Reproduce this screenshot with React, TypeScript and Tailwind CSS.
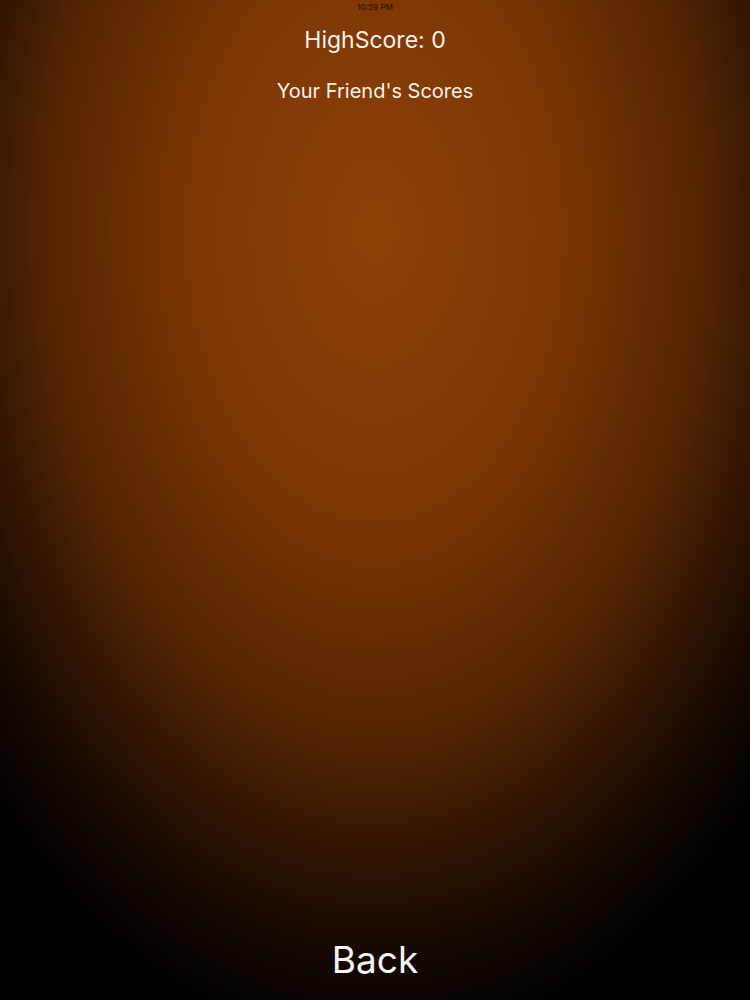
export default function App() {
  return (
    <div
      className="flex h-[1000px] w-[750px] flex-col items-center overflow-hidden bg-[radial-gradient(ellipse_530px_820px_at_50%_23%,#8e4006_0%,#7c3604_35%,#542402_62%,#1c0b01_85%,#000_100%)] text-[#fbf3ea]"
      style={{ fontFamily: 'Inter, "Noto Sans", sans-serif' }}
    >
      {/* Status bar */}
      <div className="pt-[2px] text-[8px] leading-[10px] font-medium text-[#2e1403]">10:59 PM</div>

      {/* Header */}
      <div className="mt-[14px] text-[23px] leading-[28px]">HighScore: 0</div>
      <div className="mt-[25px] text-[20px] leading-[24px]">Your Friend's Scores</div>

      <div className="flex-1" />

      {/* Back */}
      <button className="mb-[17px] text-[37px] leading-[46px] text-[#f5f5f5]">Back</button>
    </div>
  )
}
